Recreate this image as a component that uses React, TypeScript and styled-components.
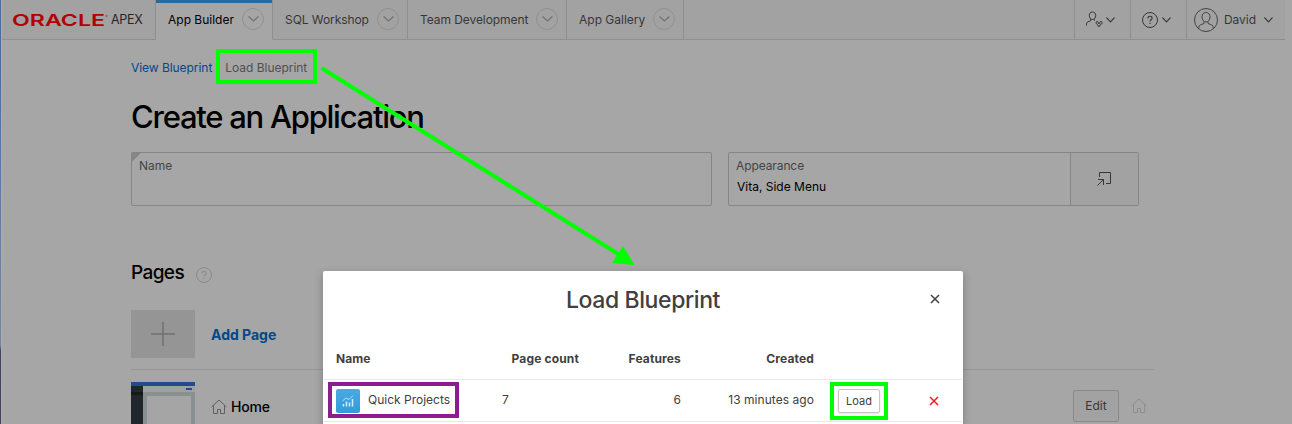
import React from 'react';
import styled, { createGlobalStyle } from 'styled-components';

const GlobalStyle = createGlobalStyle`
  *, *::before, *::after { box-sizing: border-box; }
  body { margin: 0; background: #a6a6a6; font-family: Inter, 'Liberation Sans', sans-serif; font-size: 12px; color: #373737; overflow: hidden; }
  svg { display: block; flex: none; }
  h1, h2, p { margin: 0; font-weight: 500; }
`;

const Screen = styled.div`
  position: relative;
  display: flex;
  width: 1292px;
  height: 424px;
  overflow: hidden;
`;

const DesktopEdge = styled.div`
  flex: none;
  width: 1px;
  background: linear-gradient(#4a6c9c 0 62px, #5477a5 140px, #76859f 345px, #3e4260 351px, #45435b 100%);
`;

const Page = styled.div`
  flex: 1;
  min-width: 0;
  border-left: 1px solid #abadb0;
`;

/* Kerning is set per label so that each keeps its intended width. */
const Label = styled.span<{ $size?: number; $spacing?: number; $weight?: number; $color?: string }>`
  display: block;
  white-space: nowrap;
  font-size: ${p => p.$size ?? 12}px;
  line-height: 16px;
  letter-spacing: ${p => p.$spacing ?? 0}px;
  font-weight: ${p => p.$weight ?? 400};
  color: ${p => p.$color ?? 'inherit'};
`;

const Header = styled.header`
  display: flex;
  width: 1283px;
  height: 40px;
  background: #a2a2a2;
`;

const Brand = styled.div`
  display: flex;
  align-items: center;
  width: 154px;
  padding-left: 10px;
  border-right: 1px solid #8f8f8f;
  border-bottom: 1px solid #8f8f8f;
`;

const OracleMark = styled.svg`
  width: 97px;
  height: 18px;
  margin-right: 2px;
`;

const Tab = styled.div<{ $width: number; $active?: boolean }>`
  display: flex;
  align-items: center;
  justify-content: space-between;
  width: ${p => p.$width}px;
  padding: 0 8px 1px 12px;
  border-right: 1px solid #8f8f8f;
  border-bottom: 1px solid ${p => (p.$active ? '#a6a6a6' : '#8f8f8f')};
  background: ${p => (p.$active ? '#a6a6a6' : 'transparent')};
  box-shadow: ${p => (p.$active ? 'inset 0 3px #28699f' : 'none')};
  color: ${p => (p.$active ? '#000' : '#373737')};
`;

const TabLabel = styled(Label)`
  padding-top: 2px;
`;

const Round = styled.span`
  display: grid;
  place-items: center;
  width: 22px;
  height: 22px;
  border: 1px solid #919191;
  border-radius: 50%;
  color: #727272;
`;

const HeaderFill = styled.div`
  flex: 1;
  border-bottom: 1px solid #8f8f8f;
`;

const Tool = styled.div<{ $width: number; $gap: number; $pad: number }>`
  display: flex;
  align-items: center;
  width: ${p => p.$width}px;
  gap: ${p => p.$gap}px;
  padding-left: ${p => p.$pad}px;
  border-left: 1px solid #8f8f8f;
  border-bottom: 1px solid #8f8f8f;
`;

const UserName = styled(Label)`
  margin-right: 2px;
`;

const Content = styled.main`
  width: 1023px;
  margin-left: 129px;
`;

const Links = styled.nav`
  display: flex;
  gap: 13px;
  padding-top: 20px;
`;

const Heading = styled.h1`
  margin-top: 23px;
  height: 36px;
  font-size: 31px;
  line-height: 36px;
  letter-spacing: -1.25px;
  color: #000;
  white-space: nowrap;
`;

const Fields = styled.div`
  display: flex;
  gap: 16px;
  margin-top: 17px;
`;

const Field = styled.div<{ $width: number; $required?: boolean }>`
  display: flex;
  width: ${p => p.$width}px;
  height: 54px;
  border: 1px solid #868686;
  border-radius: 2px;
  background: ${p => (p.$required ? 'linear-gradient(135deg, #868686 6px, transparent 6.5px)' : 'none')};
`;

const FieldText = styled.div`
  flex: 1;
  padding: 5px 7px;
`;

const FieldValue = styled(Label)`
  margin-top: 5px;
  padding-left: 1px;
`;

const FieldButton = styled.div`
  display: grid;
  place-items: center;
  width: 68px;
  padding-right: 2px;
  border-left: 1px solid #868686;
  background: #a2a2a2;
`;

const Section = styled.div`
  display: flex;
  align-items: center;
  gap: 12px;
  height: 24px;
  margin-top: 55px;
`;

const SectionIcon = styled.span`
  padding-top: 3px;
`;

const SectionTitle = styled.h2`
  font-size: 19px;
  line-height: 24px;
  letter-spacing: -0.6px;
  color: #000;
`;

const PageRow = styled.div<{ $line?: boolean }>`
  display: flex;
  align-items: center;
  height: ${p => (p.$line ? 60 : 73)}px;
  margin-top: ${p => (p.$line ? 25 : 0)}px;
  padding-bottom: ${p => (p.$line ? 11 : 0)}px;
  border-bottom: ${p => (p.$line ? '1px solid #979797' : 'none')};
`;

const AddLabel = styled(Label)`
  padding-top: 2px;
`;

const AddTile = styled.div`
  display: grid;
  place-items: center;
  width: 64px;
  height: 48px;
  margin-right: 16px;
  background: #959595;
`;

const Thumb = styled.div`
  display: flex;
  align-self: flex-start;
  width: 64px;
  height: 48px;
  margin: 12px 16px 0 0;
  border-top: 4px solid #25498c;
  background: #8a8f91;
`;

const ThumbNav = styled.div`
  width: 12px;
  height: 44px;
  background: linear-gradient(#202629 0 6px, #15191b 6px 9px, #202629 9px);
`;

const ThumbBody = styled.div`
  width: 52px;
`;

const ThumbBar = styled.div`
  display: flex;
  justify-content: flex-end;
  height: 6px;
  padding: 2px 3px;
  background: #9da1a2;
`;

const ThumbChip = styled.div`
  width: 6px;
  height: 2px;
  background: #25498c;
`;

const ThumbSheet = styled.div`
  height: 34px;
  margin: 4px;
  background: #a5a5a5;
`;

const RowTools = styled.div`
  display: flex;
  align-items: center;
  gap: 12px;
  margin-left: auto;
  padding: 0 7px 1px 0;
  color: #8e8e8e;
`;

const HomeTitle = styled.div`
  display: flex;
  align-items: center;
  gap: 4px;
  color: #606060;
`;

const EditButton = styled.div`
  display: grid;
  place-items: center;
  width: 46px;
  height: 32px;
  border: 1px solid #898989;
  border-radius: 2px;
  background: #a2a2a2;
  color: #373737;
`;

const Dialog = styled.section`
  position: absolute;
  left: 323px;
  top: 271px;
  width: 640px;
  height: 240px;
  border-radius: 2px;
  background: #fff;
  box-shadow: 0 3px 9px rgba(0, 0, 0, 0.25);
  color: #404040;
`;

const DialogHead = styled.div`
  display: grid;
  grid-template-columns: 56px 1fr 56px;
  place-items: center;
  height: 57px;
`;

const DialogClose = styled.span`
  padding-bottom: 1px;
`;

const DialogTitle = styled.h2`
  font-size: 23px;
  line-height: 30px;
  letter-spacing: -0.4px;
  white-space: nowrap;
`;

const GridRow = styled.div<{ $head?: boolean }>`
  display: grid;
  grid-template-columns: 123px 120px 102px 133px 92px 1fr;
  align-items: center;
  height: ${p => (p.$head ? 41 : 42)}px;
  margin: ${p => (p.$head ? '11px 1px 0' : '0 1px')};
  padding-left: 12px;
  border-bottom: 1px solid #e8e8e8;
`;

const Cell = styled.div<{ $end?: boolean; $indent?: number; $text?: boolean }>`
  display: flex;
  align-items: center;
  gap: 8px;
  justify-content: ${p => (p.$end ? 'flex-end' : 'flex-start')};
  padding-left: ${p => p.$indent ?? 0}px;
  padding-bottom: ${p => (p.$text ? 2 : 0)}px;
`;

const AppName = styled(Label)`
  padding-bottom: 2px;
`;

const AppTile = styled.div`
  display: grid;
  place-items: center;
  flex: none;
  width: 24px;
  height: 24px;
  border-radius: 2px;
  background: linear-gradient(#4aa9e2, #309cdb);
`;

const LoadButton = styled.div`
  display: grid;
  place-items: center;
  width: 42px;
  height: 24px;
  border: 1px solid #c5c5c5;
  border-radius: 2px;
  box-shadow: 0 1px 2px rgba(0, 0, 0, 0.12);
`;

const Highlight = styled.div<{ $x: number; $y: number; $w: number; $h: number; $color: string }>`
  position: absolute;
  left: ${p => p.$x}px;
  top: ${p => p.$y}px;
  width: ${p => p.$w}px;
  height: ${p => p.$h}px;
  border: 4px solid ${p => p.$color};
`;

const Arrow = styled.svg`
  position: absolute;
  left: 0;
  top: 0;
  pointer-events: none;
`;

const Chevron = ({ size = 10 }: { size?: number }) => (
  <svg width={size} height="6" viewBox="0 0 10 6" preserveAspectRatio="none" fill="none" stroke="currentColor" strokeWidth="1.1">
    <path d="M.5 .5 5 5 9.500 .5" />
  </svg>
);

const Home = () => (
  <svg width="16" height="16" viewBox="0 0 16 16" fill="none" stroke="currentColor">
    <path d="M.5 8 8 1l7.500 7M2.500 6.500v8h4v-4h3v4h4v-8" />
  </svg>
);

const Help = ({ color, size = 16 }: { color: string; size?: number }) => (
  <svg width={size} height={size} viewBox="0 0 16 16" fill="none" stroke={color}>
    <circle cx="8" cy="8" r="7.500" />
    <path d="M5.900 6.400c0-1.300.9-2.100 2.100-2.100s2.100.8 2.100 1.900c0 1.600-2.100 1.600-2.100 3.300" strokeWidth="1.100" />
    <path d="M8 10.700v1.300" strokeWidth="1.200" />
  </svg>
);

const Cross = ({ color }: { color: string }) => (
  <svg width="10" height="10" viewBox="0 0 10 10" fill="none" stroke={color} strokeWidth="1.500">
    <path d="m1 1 8 8M9 1 1 9" />
  </svg>
);

const tabs = [
  { name: 'App Builder', width: 117, spacing: 0, active: true },
  { name: 'SQL Workshop', width: 135, spacing: -0.07 },
  { name: 'Team Development', width: 159, spacing: -0.07 },
  { name: 'App Gallery', width: 117, spacing: 0 },
];

export default function App() {
  return (
    <Screen>
      <GlobalStyle />
      <DesktopEdge />
      <Page>
        <Header>
          <Brand>
            <OracleMark viewBox="0 0 97 18">
              <text x="0" y="15" textLength="93" lengthAdjust="spacingAndGlyphs" fontFamily="Inter, sans-serif" fontSize="16.5" fontWeight="600" fill="#b30000">ORACLE</text>
              <circle cx="94.500" cy="5" r=".8" fill="none" stroke="#a8302c" strokeWidth=".6" />
            </OracleMark>
            <Label $size={12.5} $spacing={-0.3} $color="#262626">APEX</Label>
          </Brand>
          {tabs.map(t => (
            <Tab key={t.name} $width={t.width} $active={t.active}>
              <TabLabel $spacing={t.spacing}>{t.name}</TabLabel>
              <Round><Chevron size={11} /></Round>
            </Tab>
          ))}
          <HeaderFill />
          <Tool $width={56} $gap={3} $pad={11}>
            <svg width="17" height="17" viewBox="0 0 17 17" fill="none" stroke="#373737" strokeWidth="1">
              <path d="M6.500 1C4.400 1 3.300 2.500 3.300 4.500S4.500 8.500 6.500 8.500s3.200-2 3.200-4S8.600 1 6.500 1ZM4.700 8v1.700L2 10.800C.8 11.300.5 12.500.5 14.500M8.300 8v1.600" />
              <path d="M10.200 11.200c.4-1.100 1.600-1.100 1.900 0v1.200h1.800v-1.200c.4-1.100 1.900-1.100 2.100.2.200 1.300-.8 2.400-1.900 2.500l-.5 1.500h-1.300l-.5-1.500c-1-.4-2-1.300-1.600-2.700Z" />
            </svg>
            <Chevron size={9} />
          </Tool>
          <Tool $width={56} $gap={4} $pad={11}>
            <Help color="#373737" />
            <Chevron size={9} />
          </Tool>
          <Tool $width={99} $gap={6} $pad={7}>
            <svg width="24" height="24" viewBox="0 0 24 24" fill="none" stroke="#444">
              <circle cx="12" cy="12" r="11.500" />
              <path d="M12 4.500c-2.500 0-4 1.700-4 4.400s1.500 5.100 4 5.100 4-2.400 4-5.100-1.500-4.400-4-4.400ZM10 13.500v2l-3.500 1.300c-1 .4-1.500 1.300-1.700 3.200M14 13.500v2l3.500 1.300c1 .4 1.500 1.300 1.700 3.200" />
            </svg>
            <UserName $spacing={-0.05}>David</UserName>
            <Chevron size={9} />
          </Tool>
        </Header>
        <Content>
          <Links>
            <Label $spacing={-0.05} $color="#00498a">View Blueprint</Label>
            <Label $spacing={-0.03} $color="#505050">Load Blueprint</Label>
          </Links>
          <Heading>Create an Application</Heading>
          <Fields>
            <Field $width={581} $required>
              <FieldText><Label $color="#454545">Name</Label></FieldText>
            </Field>
            <Field $width={411}>
              <FieldText>
                <Label $spacing={-0.1} $color="#454545">Appearance</Label>
                <FieldValue $color="#000">Vita, Side Menu</FieldValue>
              </FieldText>
              <FieldButton>
                <svg width="16" height="16" viewBox="0 0 16 16" fill="none" stroke="#373737">
                  <path d="M3.500 6V1.500h11v11H10M1.500 14.500l6-6M2 8.500h5.500V14" />
                </svg>
              </FieldButton>
            </Field>
          </Fields>
          <Section>
            <SectionTitle>Pages</SectionTitle>
            <SectionIcon><Help color="#8b8b8b" /></SectionIcon>
          </Section>
          <PageRow $line>
            <AddTile>
              <svg width="24" height="24" viewBox="0 0 24 24" stroke="#707070" strokeWidth="1.500">
                <path d="M12 0v24M0 12h24" />
              </svg>
            </AddTile>
            <AddLabel $size={14} $weight={700} $color="#00498a">Add Page</AddLabel>
          </PageRow>
          <PageRow>
            <Thumb>
              <ThumbNav />
              <ThumbBody>
                <ThumbBar><ThumbChip /></ThumbBar>
                <ThumbSheet />
              </ThumbBody>
            </Thumb>
            <HomeTitle>
              <Home />
              <Label $size={14} $spacing={-0.15} $weight={500} $color="#000">Home</Label>
            </HomeTitle>
            <RowTools>
              <EditButton><Label>Edit</Label></EditButton>
              <Home />
            </RowTools>
          </PageRow>
        </Content>
      </Page>
      <Dialog>
        <DialogHead>
          <span />
          <DialogTitle>Load Blueprint</DialogTitle>
          <DialogClose><Cross color="#404040" /></DialogClose>
        </DialogHead>
        <GridRow $head>
          <Cell><Label $weight={700} $spacing={0.1}>Name</Label></Cell>
          <Cell $end><Label $weight={700} $spacing={0.15}>Page count</Label></Cell>
          <Cell $end><Label $weight={700} $spacing={0.15}>Features</Label></Cell>
          <Cell $end><Label $weight={700} $spacing={0.15}>Created</Label></Cell>
        </GridRow>
        <GridRow>
          <Cell>
            <AppTile>
              <svg width="12" height="12" viewBox="0 0 12 12" fill="none" stroke="#d5edfa">
                <path d="M1.500 11.500V9M4.500 11.500V6.500M7.500 11.500V7.500M10.500 11.500V4" strokeWidth="1.500" />
                <path d="m.5 6 3.500-3 3 1.500L11 .5" strokeWidth=".8" />
              </svg>
            </AppTile>
            <AppName>Quick Projects</AppName>
          </Cell>
          <Cell $text $indent={43}><Label>7</Label></Cell>
          <Cell $text $end><Label>6</Label></Cell>
          <Cell $text $end><Label $spacing={0.05}>13 minutes ago</Label></Cell>
          <Cell $indent={24}><LoadButton><Label $size={11}>Load</Label></LoadButton></Cell>
          <Cell $indent={23}><Cross color="#f01b1b" /></Cell>
        </GridRow>
      </Dialog>
      <Highlight $x={216} $y={49} $w={101} $h={35} $color="#00ff00" />
      <Highlight $x={328} $y={382} $w={131} $h={36} $color="#8b1d8f" />
      <Highlight $x={830} $y={382} $w={58} $h={38} $color="#00ff00" />
      <Arrow width="1292" height="424" viewBox="0 0 1292 424">
        <path d="M321.500 68 619 254.500" stroke="#00ff00" strokeWidth="4" />
        <path d="M634.500 265 612 263 623 246Z" fill="#00ff00" />
      </Arrow>
    </Screen>
  );
}
